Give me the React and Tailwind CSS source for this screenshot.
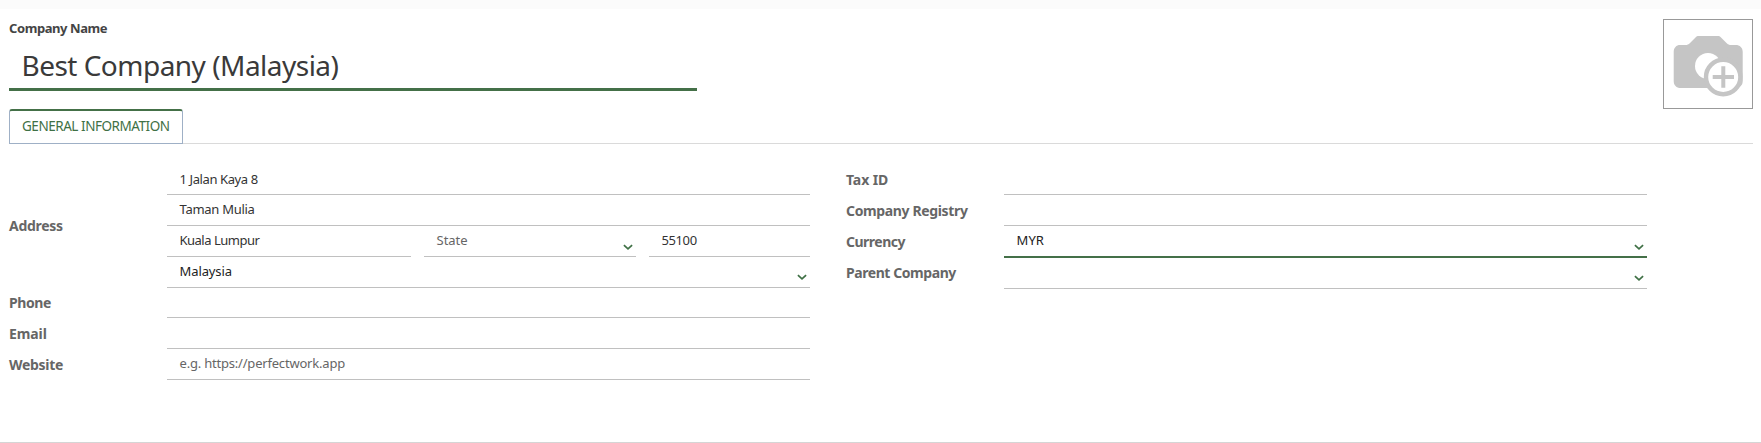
function Chevron({ className = "mt-[13px]" }) {
  return (
    <svg className={`mr-[3px] shrink-0 ${className}`} width="10" height="7" viewBox="0 0 10 7" fill="none" stroke="#3f7045" strokeWidth="1.7">
      <path d="M.9 1.1 5 4.9l4.1-3.8" />
    </svg>
  );
}

function Field({ children, className = "h-[31px] flex-1", border = "border-b border-[#c0c0c0]", select = false, chevronClass }) {
  return (
    <div className={`flex items-start justify-between pt-[5px] pl-[12.5px] ${border} ${className}`}>
      <span className="whitespace-nowrap">{children}</span>
      {select && <Chevron className={chevronClass} />}
    </div>
  );
}

function Row({ label, labelClass = "pt-[7px]", children }) {
  return (
    <div className="flex">
      <div className={`w-[158px] shrink-0 text-[14px] font-bold text-[#666] ${labelClass}`}>{label}</div>
      {children}
    </div>
  );
}

function CameraPlaceholder() {
  return (
    <svg width="88" height="88" viewBox="1 1 88 88">
      <path
        fill="#c5c5c5"
        d="M17 26h5c2.500 0 3.500-.6 5-2l6-6c.8-.7 1.300-1 2.500-1h19.500c1.200 0 1.700.3 2.500 1l6 6c1.500 1.400 2.500 2 5 2h4c4.500 0 7.200 2.700 7.200 7v29c0 4.300-2.700 7-7.200 7H17.700c-4.300 0-7-2.700-7-7V33c0-4.300 2.700-7 6.300-7z"
      />
      <circle cx="45" cy="47" r="13" fill="#fff" />
      <circle cx="60.200" cy="58" r="17.200" fill="#fff" stroke="#c5c5c5" strokeWidth="4.400" />
      <path d="M49.700 58h21.300M60.300 47.300v21.400" stroke="#c5c5c5" strokeWidth="4" />
    </svg>
  );
}

export default function App() {
  return (
    <div className="h-[443px] border-b border-[#d5d5d5] bg-white font-['Noto_Sans',sans-serif] text-[13px] leading-[18px] text-[#333]">
      <div className="h-[9px] bg-[#fbfbfb]" />

      <div className="flex h-[100px] justify-between pr-[8px] pl-[9px]">
        <div className="w-[688px] pt-[10px]">
          <div className="h-[18px] font-bold tracking-[-0.42px] text-[#444]">Company Name</div>
          <div className="mt-[5px] flex h-[49px] items-center border-b-3 border-[#447048] pl-[12.5px] text-[28px] leading-[40px] tracking-[-0.52px] text-[#3a3a3a]">
            Best Company (Malaysia)
          </div>
        </div>
        <div className="mt-[10px] h-[90px] w-[90px] border border-[#999]">
          <CameraPlaceholder />
        </div>
      </div>

      <div className="flex h-[35px] pr-[8px] pl-[9px]">
        <div className="w-[174px] rounded-t-[3px] border border-t-2 border-[#9fb0c6] border-t-[#447048] pt-[6px] pl-[12px] text-[13.5px] tracking-[-0.46px] whitespace-nowrap text-[#3f7045]">
          GENERAL INFORMATION
        </div>
        <div className="flex-1 border-b border-[#dadada]" />
      </div>

      <div className="flex gap-[36px] pt-[20px] pl-[9px]">
        <div className="w-[801px]">
          <Row label="Address" labelClass="pt-[53px] tracking-[-0.3px]">
            <div className="flex-1">
              <Field className="h-[31px] tracking-[-0.4px]"><span className="block pt-px">1 Jalan Kaya 8</span></Field>
              <Field className="h-[31px] tracking-[-0.28px]">Taman Mulia</Field>
              <div className="flex justify-between">
                <Field className="h-[31px] w-[244px] tracking-[-0.5px]">Kuala Lumpur</Field>
                <Field className="h-[31px] w-[212px] text-[#666]" select>State</Field>
                <Field className="h-[31px] w-[161px] tracking-[-0.4px]">55100</Field>
              </div>
              <Field className="h-[31px] tracking-[-0.1px] text-[#222]" select chevronClass="mt-[12px]">Malaysia</Field>
            </div>
          </Row>
          <Row label="Phone" labelClass="pt-[6px] tracking-[-0.4px]">
            <Field className="h-[30px] flex-1" />
          </Row>
          <Row label="Email" labelClass="pt-[7px] tracking-[-0.1px]">
            <Field />
          </Row>
          <Row label="Website" labelClass="pt-[7px] tracking-[-0.3px]">
            <Field className="h-[31px] flex-1 tracking-[-0.2px] text-[#666]">e.g. https://perfectwork.app</Field>
          </Row>
        </div>

        <div className="w-[801px]">
          <Row label="Tax ID" labelClass="pt-[7px] tracking-[-0.1px]">
            <Field />
          </Row>
          <Row label="Company Registry" labelClass="pt-[7px] tracking-[-0.36px]">
            <Field />
          </Row>
          <Row label="Currency" labelClass="pt-[7px] tracking-[-0.5px]">
            <Field className="h-[32px] flex-1 tracking-[0.1px] text-[#222]" border="border-b-2 border-[#447048]" select>MYR</Field>
          </Row>
          <Row label="Parent Company" labelClass="pt-[6px] tracking-[-0.43px]">
            <Field select chevronClass="mt-[12px]" />
          </Row>
        </div>
      </div>
    </div>
  );
}
